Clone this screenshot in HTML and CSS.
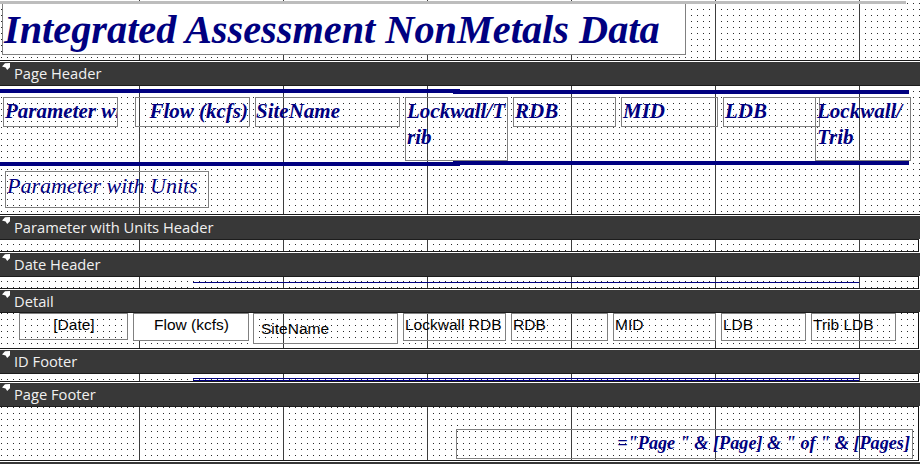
FILE: index.html
```html
<!DOCTYPE html>
<html lang="en">
<head>
<meta charset="utf-8">
<title>rptIntegratedAssessmentNonMetals : Report</title>
<link rel="stylesheet" href="styles.css">
</head>
<body>
<main class="designer">

  <!-- Report Header -->
  <section class="area area--report">
    <div class="ctl title">Integrated Assessment NonMetals Data</div>
    <div class="sel-strip"></div>
  </section>

  <div class="bar">
    <svg class="bar__grip" viewBox="0 0 8 7" width="8" height="7"><path d="M3 0.2 L8 0 L8 4.2 L5.2 7 L3.6 4.6 L0 3.6 Z"/></svg>
    <span>Page Header</span>
  </div>
  <section class="area area--page">
    <div class="rule rule--top-a"></div>
    <div class="rule rule--top-b"></div>
    <div class="ctl cap cap--param">Parameter with Units</div>
    <div class="ctl cap cap--flow">Flow (kcfs)</div>
    <div class="ctl cap cap--site">SiteName</div>
    <div class="ctl cap cap--lockrdb">Lockwall/Trib</div>
    <div class="ctl cap cap--rdb">RDB</div>
    <div class="ctl cap cap--mid">MID</div>
    <div class="ctl cap cap--ldb">LDB</div>
    <div class="ctl cap cap--lockldb">Lockwall/Trib</div>
    <div class="rule rule--bot-a"></div>
    <div class="rule rule--bot-b"></div>
    <div class="ctl group-cap">Parameter with Units</div>
  </section>

  <div class="bar">
    <svg class="bar__grip" viewBox="0 0 8 7" width="8" height="7"><path d="M3 0.2 L8 0 L8 4.2 L5.2 7 L3.6 4.6 L0 3.6 Z"/></svg>
    <span>Parameter with Units Header</span>
  </div>
  <section class="area area--edged area--group"></section>

  <div class="bar">
    <svg class="bar__grip" viewBox="0 0 8 7" width="8" height="7"><path d="M3 0.2 L8 0 L8 4.2 L5.2 7 L3.6 4.6 L0 3.6 Z"/></svg>
    <span>Date Header</span>
  </div>
  <section class="area area--edged area--date">
    <div class="hairline hairline--date"></div>
  </section>

  <div class="bar bar--short">
    <svg class="bar__grip" viewBox="0 0 8 7" width="8" height="7"><path d="M3 0.2 L8 0 L8 4.2 L5.2 7 L3.6 4.6 L0 3.6 Z"/></svg>
    <span>Detail</span>
  </div>
  <section class="area area--edged area--detail">
    <div class="ctl fld fld--date">[Date]</div>
    <div class="ctl fld fld--flow">Flow (kcfs)</div>
    <div class="ctl fld fld--site">SiteName</div>
    <div class="ctl fld fld--lockrdb">Lockwall RDB</div>
    <div class="ctl fld fld--rdb">RDB</div>
    <div class="ctl fld fld--mid">MID</div>
    <div class="ctl fld fld--ldb">LDB</div>
    <div class="ctl fld fld--tribldb">Trib LDB</div>
  </section>

  <div class="bar">
    <svg class="bar__grip" viewBox="0 0 8 7" width="8" height="7"><path d="M3 0.2 L8 0 L8 4.2 L5.2 7 L3.6 4.6 L0 3.6 Z"/></svg>
    <span>ID Footer</span>
  </div>
  <section class="area area--edged area--idfoot">
    <div class="hairline hairline--id-a"></div>
    <div class="hairline hairline--id-b"></div>
  </section>

  <div class="bar">
    <svg class="bar__grip" viewBox="0 0 8 7" width="8" height="7"><path d="M3 0.2 L8 0 L8 4.2 L5.2 7 L3.6 4.6 L0 3.6 Z"/></svg>
    <span>Page Footer</span>
  </div>
  <section class="area area--edged area--pagefoot">
    <div class="ctl pageno">="Page " &amp; [Page] &amp; " of " &amp; [Pages]</div>
  </section>

  <!-- next section bar, running past the bottom of the window -->
  <div class="bar"></div>
</main>
</body>
</html>
```

FILE: styles.css
```css
* { box-sizing: border-box; }

html, body {
  margin: 0;
  padding: 0;
  background: #fff;
}

body {
  width: 920px;
  height: 464px;
  overflow: hidden;
  font-family: "Liberation Sans", Arial, sans-serif;
}

.designer {
  display: flex;
  flex-direction: column;
  width: 920px;
}

/* ---- section design surfaces: 6px dot grid + inch lines ---- */
.area {
  position: relative;
  flex: none;
  width: 920px;
  border-top: 1px solid #1c1c1c;
  border-bottom: 1px solid #1c1c1c;
  background-color: #fff;
  background-image:
    linear-gradient(to right, #3c3c3c 1px, transparent 1px),
    conic-gradient(at 1px 1px, transparent 0 270deg, #2a2a2a 270deg);
  background-size: 144px 100%, 6px 6px;
  background-position: 139px 0, 1px var(--dot-y, 0px);
}

.area--edged {
  width: 919px;
  border-right: 1px solid #111;
}

.area--report   { height: 61px;  border-top: 0; --dot-y: 3px; }
.area--page     { height: 130px; --dot-y: 5px; }
.area--group    { height: 13px;  --dot-y: 4px; }
.area--date     { height: 13px;  --dot-y: 4px; }
.area--detail   { height: 37px;  --dot-y: 0px; }
.area--idfoot   { height: 9px;   --dot-y: 5px; }
.area--pagefoot { height: 55px;  --dot-y: 0px; }

/* ---- section bars ---- */
.bar {
  flex: none;
  display: flex;
  align-items: flex-start;
  height: 23px;
  margin-top: 1px;
  padding-left: 2px;
  background: #383838;
  color: #f0f0f0;
  font-family: "Open Sans", "Noto Sans", sans-serif;
  font-size: 14.7px;
  line-height: 23px;
  white-space: nowrap;
}

.bar--short { height: 22px; line-height: 22px; }

.bar__grip {
  flex: none;
  margin-top: 1px;
  margin-right: 4px;
  fill: #fff;
}

/* ---- controls ---- */
.ctl {
  position: absolute;
  border: 1px solid #808080;
  overflow: hidden;
}

.title {
  left: 2px;
  top: 1px;
  width: 684px;
  height: 54px;
  background: #fff;
  padding: 4px 0 0 1px;
  color: #000080;
  font-family: "Liberation Serif", "Times New Roman", serif;
  font-weight: bold;
  font-style: italic;
  font-size: 40.3px;
  line-height: 48px;
  white-space: nowrap;
}

.sel-strip {
  position: absolute;
  left: 0;
  top: 1px;
  width: 906px;
  height: 3px;
  background: #bdbdbd;
}

.rule {
  position: absolute;
  height: 4px;
  background: #000080;
}
.rule--top-a { left: 0;     top: 3px;  width: 460px; }
.rule--top-b { left: 453px; top: 4px;  width: 456px; }
.rule--bot-a { left: 0;     top: 76px; width: 460px; }
.rule--bot-b { left: 453px; top: 75px; width: 456px; }

.cap {
  top: 11px;
  height: 30px;
  color: #000080;
  font-family: "Liberation Serif", "Times New Roman", serif;
  font-weight: bold;
  font-style: italic;
  font-size: 21px;
  line-height: 26px;
  padding: 0 0 0 1px;
  word-break: break-all;
}
.cap--param   { left: 3px;   width: 115px; white-space: nowrap; }
.cap--flow    { left: 135px; width: 115px; text-align: right; padding: 0 1px 0 0; }
.cap--site    { left: 255px; width: 145px; padding-left: 0; }
.cap--lockrdb { left: 405px; width: 103px; height: 64px; }
.cap--rdb     { left: 513px; width: 103px; }
.cap--mid     { left: 621px; width: 97px; }
.cap--ldb     { left: 723px; width: 97px; }
.cap--lockldb { left: 815px; width: 96px;  height: 64px; }

.group-cap {
  left: 5px;
  top: 85px;
  width: 204px;
  height: 37px;
  padding: 1px 0 0 1px;
  color: #000080;
  font-family: "Liberation Serif", "Times New Roman", serif;
  font-style: italic;
  font-size: 22px;
  line-height: 26px;
  white-space: nowrap;
}

.hairline {
  position: absolute;
  height: 1px;
  background: #000080;
}
.hairline--date { left: 193px; top: 5px; width: 666px; }
.hairline--id-a { left: 193px; top: 4px; width: 666px; }
.hairline--id-b { left: 193px; top: 6px; width: 666px; }

.fld {
  top: 0;
  height: 28px;
  padding: 2px 0 0 1px;
  color: #000;
  font-size: 15.5px;
  line-height: 18px;
  white-space: nowrap;
}
.fld--date    { left: 19px;  width: 109px; text-align: center; height: 27px; }
.fld--flow    { left: 133px; width: 116px; text-align: center; background: #fff; }
.fld--site    { left: 253px; width: 145px; height: 31px; padding: 6px 0 0 7px; }
.fld--lockrdb { left: 403px; width: 103px; }
.fld--rdb     { left: 511px; width: 97px; }
.fld--mid     { left: 613px; width: 103px; }
.fld--ldb     { left: 721px; width: 85px; }
.fld--tribldb { left: 811px; width: 85px; }

.pageno {
  left: 456px;
  top: 22px;
  width: 457px;
  height: 30px;
  padding: 0 2px 0 0;
  text-align: right;
  color: #000080;
  font-family: "Liberation Serif", "Times New Roman", serif;
  font-weight: bold;
  font-style: italic;
  font-size: 18.2px;
  line-height: 26px;
  white-space: nowrap;
}
```
